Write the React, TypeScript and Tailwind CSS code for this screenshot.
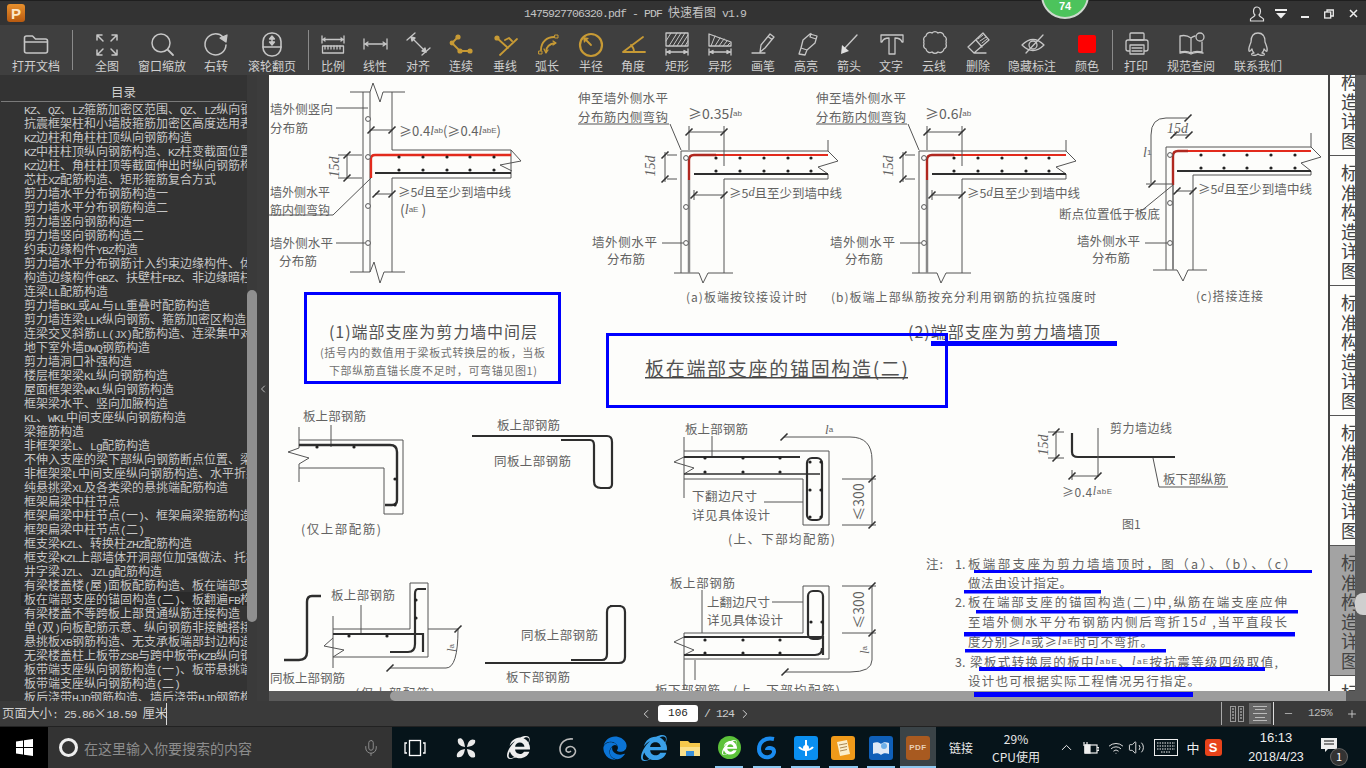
import React from 'react';
import { FaEdge, FaInternetExplorer } from 'react-icons/fa';
import { Mic, Volume2, Wifi, ChevronUp, ChevronLeft, ChevronRight, Minus, Plus } from 'lucide-react';

type P = { c: number; w: number; node: React.ReactNode };
function Placed({ items, className = '' }: { items: P[]; className?: string }) {
  let end = 0;
  return (
    <div className={'flex ' + className}>
      {items.map((it, i) => {
        const ml = it.c - it.w / 2 - end;
        end = it.c + it.w / 2;
        return (
          <div key={i} className="flex shrink-0 flex-col items-center justify-center" style={{ width: it.w, marginLeft: ml }}>
            {it.node}
          </div>
        );
      })}
    </div>
  );
}

function Mixed({ t }: { t: string }) {
  const parts = t.split(/([\x20-\x7e]+)/).filter(Boolean);
  return (
    <>
      {parts.map((p, i) =>
        /^[\x20-\x7e]+$/.test(p) ? (
          <span key={i} className="font-['Liberation_Mono',monospace] text-[11.5px] tracking-[-0.9px]">{p}</span>
        ) : (
          <span key={i}>{p}</span>
        ),
      )}
    </>
  );
}

const Ic = ({ children, gold }: { children: React.ReactNode; gold?: boolean }) => (
  <svg width="40" height="28" viewBox="0 0 40 28" fill="none" stroke={gold ? '#c79a35' : '#c6c6c6'} strokeWidth={gold ? 1.8 : 1.3} strokeLinecap="round" strokeLinejoin="round">
    {children}
  </svg>
);
const G = '#c79a35';

const tools: { c: number; label: string; icon: React.ReactNode }[] = [
  { c: 36, label: '打开文档', icon: <Ic><path d="M8.5 8a2 2 0 0 1 2-2h6l3 3h10a2 2 0 0 1 2 2v10a2 2 0 0 1-2 2h-19a2 2 0 0 1-2-2z" strokeWidth="1.6" /><path d="M8.5 12H31.5" /></Ic> },
  { c: 107, label: '全图', icon: <Ic><g strokeWidth="1.5"><path d="M16 11L10 5M10 10V5H15M24 11L30 5M30 10V5H25M16 19L10 25M10 20V25H15M24 19L30 25M30 20V25H25" /></g></Ic> },
  { c: 162, label: '窗口缩放', icon: <Ic><circle cx="19" cy="13" r="9" strokeWidth="1.5" /><path d="M26 20L31 25" strokeWidth="1.8" /></Ic> },
  { c: 216, label: '右转', icon: <Ic><path d="M27 7A10.5 10.5 0 1 0 30 15" strokeWidth="1.5" /><path d="M24 8L31 5L30 12Z" fill="#c6c6c6" /></Ic> },
  { c: 272, label: '滚轮翻页', icon: <Ic><rect x="11" y="3" width="18" height="23" rx="8.5" strokeWidth="1.6" /><path d="M11 17H29" strokeWidth="1.5" /><path d="M20 7V14" strokeWidth="1.5" /><path d="M17.5 9L20 6L22.5 9ZM17.5 12L20 15L22.5 12Z" fill="#c6c6c6" /></Ic> },
  { c: 333, label: '比例', icon: <Ic><path d="M9 6V13M31 6V13M10 9.5H30M12 8L10 9.5L12 11M28 8L30 9.5L28 11" /><rect x="9.5" y="16" width="21" height="7" /><path d="M12 16V19M15 16V19M18 16V19M21 16V19M24 16V19M27 16V19" /></Ic> },
  { c: 375, label: '线性', icon: <Ic><path d="M9 9V19M32 9V19M10 14H31M13 12L10 14L13 16M28 12L31 14L28 16" /></Ic> },
  { c: 418, label: '对齐', icon: <Ic><path d="M9 10L17 3M24 25L32 18M13 7L28 22" /><path d="M13 7L17 8L14 11ZM28 22L24 21L27 18Z" fill="#c6c6c6" /></Ic> },
  { c: 461, label: '连续', icon: <Ic gold><path d="M11 13L17 7M11 13L19 21L29 21" /><g fill={G} stroke="none"><circle cx="17" cy="7" r="2.6" /><circle cx="11" cy="13" r="2.4" /><circle cx="19" cy="21" r="2.6" /><circle cx="29" cy="21" r="2.6" /></g></Ic> },
  { c: 505, label: '垂线', icon: <Ic gold><path d="M12 8L23 18M15 25L32 9M20 10L24 8L27 11" /><circle cx="12" cy="8" r="2.6" fill={G} stroke="none" /></Ic> },
  { c: 547, label: '弧长', icon: <Ic gold><path d="M14 20C14 12 20 7 27 7M19 22C19 17 22 14 28 13" /><path d="M26 11L29 13L26 15M17 19L19 23L21 20" strokeWidth="1.3" /><rect x="12" y="21" width="3" height="3" strokeWidth="1" /><rect x="28" y="5" width="3" height="3" strokeWidth="1" /></Ic> },
  { c: 591, label: '半径', icon: <Ic gold><circle cx="20" cy="15" r="11" strokeWidth="2.2" /><path d="M20 15L14 9" /><path d="M12 7L18 8L13 13Z" fill={G} stroke="none" /></Ic> },
  { c: 633, label: '角度', icon: <Ic gold><path d="M10 22H32M10 22L30 7M21 22C21 19 20 17 18 15" /></Ic> },
  { c: 677, label: '矩形', icon: <Ic><rect x="9" y="3" width="22" height="13" /><path d="M12 16L20 3M16 16L24 3M20 16L28 3M24 16L31 5M28 16L31 11M9 11L14 3" strokeWidth="1" /><path d="M9 19V25M31 19V25M10 22H30" /><path d="M13 20.5L10 22L13 23.5ZM27 20.5L30 22L27 23.5Z" fill="#c6c6c6" /></Ic> },
  { c: 720, label: '异形', icon: <Ic><path d="M9 4L31 12V16H9Z" /><path d="M11 16L15 6M15 16L20 8M19 16L24 9M23 16L27 11M27 16L30 13" strokeWidth="1" /><path d="M9 19V25M31 19V25M10 22H30" /><path d="M13 20.5L10 22L13 23.5ZM27 20.5L30 22L27 23.5Z" fill="#c6c6c6" /></Ic> },
  { c: 763, label: '画笔', icon: <Ic><path d="M9 23H22M17 22L18 15L27 4L31 7L22 18ZM25 6.5L29 9.5" /></Ic> },
  { c: 806, label: '高亮', icon: <Ic><path d="M24 4L31 6L29 13L21 20L15 18L17 10ZM25 3.5L24 7L30 9M15 18L13 24L19 25L21 20" /></Ic> },
  { c: 849, label: '箭头', icon: <Ic><path d="M28 5L15 19" strokeWidth="1.4" /><path d="M12 24L13 15L20 21Z" fill="#e0e0e0" stroke="none" /></Ic> },
  { c: 891, label: '文字', icon: <Ic><path d="M10 5H32V12H31C30 9 28 8 24 8V24H18V8C14 8 12 9 11 12H10Z" /></Ic> },
  { c: 934, label: '云线', icon: <Ic><path d="M12 6a4 4 0 0 1 6-3a4 4 0 0 1 6 0a4 4 0 0 1 6 3a4 4 0 0 1 2 5a4 4 0 0 1 0 3a4 4 0 0 1-2 5a4 4 0 0 1-6 3a4 4 0 0 1-6 0a4 4 0 0 1-6-3a4 4 0 0 1-2-5a4 4 0 0 1 0-3a4 4 0 0 1 2-5z" /></Ic> },
  { c: 978, label: '删除', icon: <Ic><path d="M10 17L25 3L31 10L16 23ZM16 23H28M18 10L24 17" /><path d="M20 9L25 5M22 11L28 7M24 13L29 9" strokeWidth="1" /></Ic> },
  { c: 1032, label: '隐藏标注', icon: <Ic><path d="M10 15Q21 4 32 15Q21 26 10 15Z" /><circle cx="21" cy="15" r="4" /><path d="M14 23L31 5" /></Ic> },
  { c: 1087, label: '颜色', icon: <div className="mx-[2px] my-[5px] h-[18px] w-[18px] rounded-[2px] bg-[#ff0000]" /> },
  { c: 1136, label: '打印', icon: <Ic><rect x="14" y="3" width="14" height="7" rx="1" /><rect x="10" y="10" width="22" height="11" rx="2" /><rect x="14" y="15" width="14" height="9" fill="#3f3f3f" /><path d="M16 18H26M16 21H26" /></Ic> },
  { c: 1191, label: '规范查阅', icon: <Ic><path d="M20 8C16 5 13 5 9 6V22C13 21 17 21 20 23C23 21 27 21 31 22V12M20 8V23M20 8C21 7 22 6.5 24 6" /><circle cx="29" cy="7" r="4" /><path d="M9 23C13 22 17 22 20 24C23 22 27 22 32 23" /></Ic> },
  { c: 1258, label: '联系我们', icon: <Ic><path d="M20 3C14 3 13 8 13 12C12 15 10 18 11 21C12 22 13 20 14 19C14 21 15 22 16 23C14 23 13 24 14 25C16 26 19 25 20 24C21 25 24 26 26 25C27 24 26 23 24 23C25 22 26 21 26 19C27 20 28 22 29 21C30 18 28 15 27 12C27 8 26 3 20 3Z" /></Ic> },
];

const Sep = () => <div className="h-[40px] w-px bg-[#8a8a8a]" />;

const toolbarItems: P[] = [
  tools[0], { c: 72.5, sep: true }, ...tools.slice(1, 5), { c: 308.5, sep: true }, ...tools.slice(5, 23), { c: 1112.5, sep: true }, ...tools.slice(23),
].map((t: any) =>
  t.sep
    ? { c: t.c, w: 1, node: <Sep /> }
    : {
        c: t.c,
        w: 40,
        node: (
          <>
            <div className="flex h-[28px] items-center justify-center">{t.icon}</div>
            <div className="mt-[0px] whitespace-nowrap text-[12px] leading-[16px] text-[#cfcfcf]">{t.label}</div>
          </>
        ),
      },
);

const toc = [
  'KZ、QZ、LZ箍筋加密区范围、QZ、LZ纵向钢筋构造',
  '抗震框架柱和小墙肢箍筋加密区高度选用表',
  'KZ边柱和角柱柱顶纵向钢筋构造',
  'KZ中柱柱顶纵向钢筋构造、KZ柱变截面位置纵向钢筋',
  'KZ边柱、角柱柱顶等截面伸出时纵向钢筋构造',
  '芯柱XZ配筋构造、矩形箍筋复合方式',
  '剪力墙水平分布钢筋构造一',
  '剪力墙水平分布钢筋构造二',
  '剪力墙竖向钢筋构造一',
  '剪力墙竖向钢筋构造二',
  '约束边缘构件YBZ构造',
  '剪力墙水平分布钢筋计入约束边缘构件、体积配箍率',
  '构造边缘构件GBZ、扶壁柱FBZ、非边缘暗柱构造',
  '连梁LL配筋构造',
  '剪力墙BKL或AL与LL重叠时配筋构造',
  '剪力墙连梁LLK纵向钢筋、箍筋加密区构造',
  '连梁交叉斜筋LL(JX)配筋构造、连梁集中对角斜筋',
  '地下室外墙DWQ钢筋构造',
  '剪力墙洞口补强构造',
  '楼层框架梁KL纵向钢筋构造',
  '屋面框架梁WKL纵向钢筋构造',
  '框架梁水平、竖向加腋构造',
  'KL、WKL中间支座纵向钢筋构造',
  '梁箍筋构造',
  '非框架梁L、Lg配筋构造',
  '不伸入支座的梁下部纵向钢筋断点位置、梁侧面构造',
  '非框架梁L中间支座纵向钢筋构造、水平折梁配筋',
  '纯悬挑梁XL及各类梁的悬挑端配筋构造',
  '框架扁梁中柱节点',
  '框架扁梁中柱节点(一)、框架扁梁箍筋构造',
  '框架扁梁中柱节点(二)',
  '框支梁KZL、转换柱ZHZ配筋构造',
  '框支梁KZL上部墙体开洞部位加强做法、托柱转换梁',
  '井字梁JZL、JZLg配筋构造',
  '有梁楼盖楼(屋)面板配筋构造、板在端部支座的锚固',
  '板在端部支座的锚固构造(二)、板翻遍FB构造',
  '有梁楼盖不等跨板上部贯通纵筋连接构造',
  '单(双)向板配筋示意、纵向钢筋非接触搭接构造',
  '悬挑板XB钢筋构造、无支承板端部封边构造',
  '无梁楼盖柱上板带ZSB与跨中板带KZB纵向钢筋',
  '板带端支座纵向钢筋构造(一)、板带悬挑端纵向钢筋',
  '板带端支座纵向钢筋构造(二)',
  '板后浇带HJD钢筋构造、墙后浇带HJD钢筋构造',
];

const T = ({ x, y, s = 14, l, c = '#555', children, r }: { x: number; y: number; s?: number; l?: number; c?: string; children: React.ReactNode; r?: boolean }) => (
  <text x={x} y={y} fontSize={s} fill={c} opacity={0.92} stroke="none" dominantBaseline="central" textLength={l} lengthAdjust={l ? 'spacing' : undefined} transform={r ? `rotate(-90 ${x} ${y})` : undefined} textAnchor={r ? 'middle' : undefined}>
    {children}
  </text>
);
const It = ({ children }: { children: React.ReactNode }) => <tspan fontStyle="italic" fontFamily="'Liberation Serif',serif">{children}</tspan>;
const Sub = ({ children }: { children: React.ReactNode }) => <tspan fontSize="8" fontFamily="'Liberation Sans',sans-serif">{children}</tspan>;
const Tick = ({ x, y }: { x: number; y: number }) => <path d={`M${x - 3.5} ${y + 3.5}L${x + 3.5} ${y - 3.5}`} stroke="#333" strokeWidth="1.6" />;
const Dots = ({ xs, ys }: { xs: number[]; ys: number[] }) => (
  <g fill="#222" stroke="none">
    {xs.flatMap((x) => ys.map((y) => <circle key={x + '-' + y} cx={x} cy={y} r="1.6" />))}
  </g>
);
const Rings = ({ x, ys }: { x: number; ys: number[] }) => (
  <g fill="#fff" stroke="#555">
    {ys.map((y) => <circle key={y} cx={x} cy={y} r="2.4" />)}
  </g>
);

const WallB = ({ dx, top, tx }: { dx: number; top: string; tx: number }) => (
  <g transform={`translate(${dx} 0)`} stroke="#555" fill="none">
    <path d="M919 151V273M962 179V273M912 273H937L941 283L946 273H971M919 151H1066V140M962 179H1066" />
    <path d="M927 180V273" stroke="#888" strokeWidth="2.5" />
    <path d="M1066 151L1076 161L1056 167L1066 174V179" />
    <path d="M927 180V160Q927 155 932 155H954" stroke="#b02820" strokeWidth="2.4" />
    <path d="M954 155H1066" stroke="#e22a1c" strokeWidth="2.2" />
    <path d="M932 174H1066" stroke="#2e2e2e" strokeWidth="2.2" />
    <Dots xs={[954, 978, 1002, 1026, 1049]} ys={[158, 171]} />
    <Rings x={924} ys={[158, 207, 243]} />
    <path d="M927 132H962M927 126V150M962 126V166M932 195H962M932 190V200" />
    <Tick x={927} y={132} /><Tick x={962} y={132} /><Tick x={932} y={195} /><Tick x={962} y={195} />
    <path d="M907 124H816M908 124L919 150M900 243H921M915 155H905M915 179H905M903 152V182" />
    <Tick x={903} y={155} /><Tick x={903} y={179} />
    <T x={816} y={97} s={12.5} l={90}>伸至墙外侧水平</T>
    <T x={816} y={116} s={12.5} l={90}>分布筋内侧弯钩</T>
    <T x={888} y={166} s={14} r><It>15d</It></T>
    <T x={tx} y={113} s={14}>≥{top}<It>l</It><Sub>ab</Sub></T>
    <T x={967} y={192} s={12.5} l={113}>≥5<It>d</It>且至少到墙中线</T>
    <T x={830} y={241} s={12.5} l={65}>墙外侧水平</T>
    <T x={845} y={258} s={12.5} l={38}>分布筋</T>
  </g>
);

const LinkSq = ({ children, c }: { children?: React.ReactNode; c: string }) => (
  <div className="flex h-[24px] w-[24px] items-center justify-center rounded-[3px]" style={{ background: c }}>{children}</div>
);

const taskItems: P[] = [
  { c: 415, w: 24, node: <svg width="22" height="18" viewBox="0 0 22 18" fill="none" stroke="#fff" strokeWidth="1.3"><rect x="5.5" y="1.5" width="11" height="15" /><path d="M3 4H1V14H3M19 4H21V14H19" /></svg> },
  { c: 466, w: 26, node: <svg width="24" height="24" viewBox="0 0 24 24" fill="#eaeaea"><path d="M11 11C5 10 3 7 4 3C7 1 10 3 11 11ZM13 11C14 5 17 2 21 4C22 7 20 10 13 11ZM13 13C19 14 22 16 21 21C17 23 14 20 13 13ZM11 13C10 19 8 22 3 21C2 17 5 14 11 13Z" /></svg> },
  { c: 518, w: 26, node: <FaInternetExplorer size={23} color="#eee" /> },
  { c: 568, w: 26, node: <svg width="22" height="24" viewBox="0 0 22 24" fill="none" stroke="#bbb" strokeWidth="1.6"><path d="M16 3C8 2 3 7 3 13C3 19 8 22 13 21C18 20 20 15 17 12C14 9 9 11 9 14C9 16 12 17 14 15" /></svg> },
  { c: 615, w: 26, node: <FaEdge size={24} color="#0b74d6" /> },
  { c: 654, w: 26, node: <div className="relative"><FaInternetExplorer size={26} color="#3aa0e8" /></div> },
  { c: 690, w: 26, node: <svg width="22" height="20" viewBox="0 0 22 20"><path d="M1 3H9L11 5H21V18H1Z" fill="#f5c84c" /><rect x="1" y="9" width="20" height="9" fill="#fbe08a" /><rect x="7" y="13" width="8" height="5" fill="#3a8fd8" /></svg> },
  { c: 729, w: 26, node: <div className="flex h-[23px] w-[23px] items-center justify-center rounded-full bg-[#5cc23a]"><FaInternetExplorer size={15} color="#fff" /></div> },
  { c: 767, w: 26, node: <svg width="24" height="26" viewBox="0 0 24 26" fill="none" stroke="#1a8cf0" strokeWidth="4"><path d="M19 4C10 2 4 7 4 14C4 20 9 23 14 22C19 21 20 16 18 14C16 12 12 13 12 15" /></svg> },
  { c: 806, w: 26, node: <LinkSq c="#0a8ff0"><svg width="18" height="18" viewBox="0 0 18 18" fill="none" stroke="#fff" strokeWidth="2"><path d="M9 1V17M2 8C5 12 13 12 16 8" /><circle cx="9" cy="9" r="2" fill="#fff" /></svg></LinkSq> },
  { c: 843, w: 26, node: <LinkSq c="#f09a1a"><svg width="16" height="18" viewBox="0 0 16 18"><path d="M2 3L12 1L15 15L5 17Z" fill="#fbeecb" /><path d="M4 6L12 4.5M5 9L12 7.5M5 12L12 10.5" stroke="#a85" strokeWidth="1" /></svg></LinkSq> },
  { c: 881, w: 26, node: <LinkSq c="#0f5fb8"><svg width="18" height="16" viewBox="0 0 18 16"><path d="M1 3C4 2 7 2 9 4C11 2 14 2 17 3V14C14 13 11 13 9 15C7 13 4 13 1 14Z" fill="#dfe9f5" /><circle cx="12" cy="6" r="3" fill="#6fb0e8" /></svg></LinkSq> },
  { c: 918, w: 36, node: <div className="flex h-[24px] w-[24px] items-center justify-center rounded-[3px] bg-[#a85a20] font-['Liberation_Sans',sans-serif] text-[8px] font-bold tracking-[0.5px] text-[#e8d0b8]">PDF</div> },
];

const trayText = 'text-[12px] leading-[16px] text-[#e8e8e8]';
const trayItems: P[] = [
  { c: 961, w: 30, node: <span className={trayText}>链接</span> },
  { c: 1016, w: 56, node: <><span className={trayText + ' mb-[2px]'}>29%</span><span className={trayText}>CPU使用</span></> },
  { c: 1066, w: 16, node: <ChevronUp size={17} color="#eee" strokeWidth={1.4} /> },
  { c: 1090, w: 18, node: <svg width="18" height="14" viewBox="0 0 18 14" fill="none" stroke="#eee" strokeWidth="1.2"><rect x="4" y="4" width="12" height="8" /><path d="M16 6.5H18V9.5H16" /><rect x="4" y="4" width="5" height="8" fill="#eee" /><path d="M3 1V5M6 1V5" /></svg> },
  { c: 1116, w: 18, node: <Wifi size={16} color="#ddd" strokeWidth={1.5} /> },
  { c: 1136, w: 18, node: <Volume2 size={17} color="#eee" strokeWidth={1.3} /> },
  { c: 1166, w: 24, node: <svg width="24" height="17" viewBox="0 0 24 17" fill="none" stroke="#eee" strokeWidth="1"><rect x="0.5" y="0.5" width="23" height="16" /><path d="M3 4H21M3 7H21M3 10H21M7 13H17" strokeDasharray="1.5 1" /></svg> },
  { c: 1193, w: 14, node: <span className="text-[13px] text-[#eee]">中</span> },
  { c: 1213, w: 18, node: <div className="flex h-[17px] w-[17px] items-center justify-center rounded-[3px] bg-[#e8431a] font-['Liberation_Sans',sans-serif] text-[13px] font-bold leading-none text-white">S</div> },
  { c: 1276, w: 62, node: <><span className="mb-[5px] text-[13px] leading-[14px] text-[#eee] font-['Liberation_Sans',sans-serif]">16:13</span><span className="text-[12.5px] leading-[14px] text-[#eee] font-['Liberation_Sans',sans-serif]">2018/4/23</span></> },
  { c: 1333, w: 28, node: <div className="relative h-[24px] w-[26px]"><svg width="17" height="17" viewBox="0 0 17 17" className="ml-[1px] mt-[1px]"><path d="M0 1H16V12H7L4 15V12H0Z" fill="#eee" /><path d="M3 4H13M3 7H13" stroke="#111" strokeWidth="1" /></svg><span className="absolute bottom-[-5px] right-[-1px] flex h-[16px] w-[16px] items-center justify-center rounded-full bg-[#333] text-[11px] leading-none text-white ring-1 ring-[#666]">1</span></div> },
];

const blue = '#0000ff';

function Drawing() {
  return (
    <svg width="1059" height="616" viewBox="269 75 1059 616" className="block shrink-0 bg-[#fdfdfb]" stroke="none">
      {/* (1) mid-floor detail */}
      <g stroke="#555" fill="none">
        <path d="M350 92H370L373 83L380 102L383 92H405M363 92V272M370 92V272M392 92V150H511M392 178V272M350 272H370L374 262L380 283L384 272H405M392 178H511V150M511 150L521 161L500 165L512 171" />
        <path d="M371 178V159Q371 155 375 155H511" stroke="#e22a1c" strokeWidth="2.3" />
        <path d="M375 173H511" stroke="#2e2e2e" strokeWidth="2.2" />
        <Dots xs={[399, 423, 447, 470, 494]} ys={[157, 170]} />
        <Rings x={368} ys={[119, 157, 206, 243]} />
        <path d="M336 108H368M336 243H365M269 215H333L371 178M370 130H392M375 194H392M347 155V178M338 155H362M338 178H362" />
        <Tick x={371} y={130} /><Tick x={392} y={130} /><Tick x={376} y={194} /><Tick x={392} y={194} /><Tick x={347} y={155} /><Tick x={347} y={178} />
        <T x={270} y={108} s={12.5} l={63}>墙外侧竖向</T>
        <T x={270} y={127} s={12.5} l={38}>分布筋</T>
        <T x={270} y={191} s={12} l={60}>墙外侧水平</T>
        <T x={270} y={209} s={12} l={60}>筋内侧弯钩</T>
        <T x={270} y={242} s={12.5} l={63}>墙外侧水平</T>
        <T x={279} y={260} s={12.5} l={38}>分布筋</T>
        <T x={334} y={167} s={14} r><It>15d</It></T>
        <T x={399} y={130} s={13} l={102}>≥0.4<It>l</It><Sub>ab</Sub>(≥0.4<It>l</It><Sub>abE</Sub>)</T>
        <T x={398} y={191} s={12.5} l={113}>≥5<It>d</It>且至少到墙中线</T>
        <T x={400} y={209} s={14}>(<It>l</It><Sub>aE</Sub> )</T>
      </g>

      <WallB dx={-238} top="0.35" tx={926} />
      <WallB dx={0} top="0.6" tx={925} />

      {/* (c) */}
      <g stroke="#555" fill="none">
        <path d="M1166 147V270M1193 175V270M1153 270H1177L1183 281L1188 270H1207M1166 147H1311V133M1193 175H1311M1311 147L1321 157L1301 163L1311 171V175" />
        <path d="M1173 185V270" stroke="#888" strokeWidth="2" />
        <path d="M1173 185V156Q1173 151 1178 151H1188" stroke="#b02820" strokeWidth="2.4" />
        <path d="M1188 151H1311" stroke="#e22a1c" strokeWidth="2.2" />
        <path d="M1177 171H1311" stroke="#2e2e2e" strokeWidth="2.2" />
        <Dots xs={[1201, 1224, 1247, 1271, 1295]} ys={[155, 168]} />
        <Rings x={1170} ys={[155, 203, 243]} />
        <path d="M1187 118H1166Q1151 118 1151 135V183M1146 184H1173M1173 135H1189M1176 191H1193M1173 185L1140 212M1145 243H1167" />
        <Tick x={1188} y={118} /><Tick x={1152} y={184} /><Tick x={1174} y={135} /><Tick x={1189} y={135} /><Tick x={1177} y={191} /><Tick x={1193} y={191} />
        <T x={1143} y={152} s={14}><It>l</It><Sub>1</Sub></T>
        <T x={1167} y={128} s={14}><It>15d</It></T>
        <T x={1198} y={188} s={12.5} l={114}>≥5<It>d</It>且至少到墙中线</T>
        <T x={1059} y={213} s={12.5} l={101}>断点位置低于板底</T>
        <T x={1077} y={240} s={12.5} l={63}>墙外侧水平</T>
        <T x={1092} y={257} s={12.5} l={38}>分布筋</T>
      </g>

      <T x={686} y={296} s={12} l={121}>(a)板端按铰接设计时</T>
      <T x={831} y={296} s={12} l={265}>(b)板端上部纵筋按充分利用钢筋的抗拉强度时</T>
      <T x={1196} y={295} s={12} l={67}>(c)搭接连接</T>

      {/* captions */}
      <rect x="305.5" y="293.5" width="254" height="89" fill="none" stroke={blue} strokeWidth="3" />
      <T x={329} y={331} s={16} c="#444" l={208}>(1)端部支座为剪力墙中间层</T>
      <T x={320} y={352} s={11} c="#666" l={225}>(括号内的数值用于梁板式转换层的板，当板</T>
      <T x={329} y={370} s={11} c="#666" l={208}>下部纵筋直锚长度不足时，可弯锚见图1)</T>
      <T x={908} y={331} s={16} c="#444" l={192}>(2)端部支座为剪力墙墙顶</T>
      <rect x="607.5" y="334.5" width="339" height="72" fill="none" stroke={blue} strokeWidth="3" />
      <T x={645} y={367} s={19} c="#444" l={263}>板在端部支座的锚固构造(二)</T>
      <rect x="645" y="377" width="263" height="1.5" fill="#444" />
      <rect x="931" y="341" width="186" height="5" fill={blue} />

      {/* A */}
      <g stroke="#555" fill="none">
        <path d="M299 427V448M299 468V482M299 440H403V514H384V468H299M331 425V447M299 448L288 452L309 458L299 464V468" />
        <path d="M299 445H390Q397 445 397 452V500Q397 505 392 505H385" stroke="#2e2e2e" strokeWidth="2.4" />
        <Dots xs={[317, 354]} ys={[447]} /><Dots xs={[395]} ys={[479, 505]} />
        <T x={303} y={415} s={12.5} l={63}>板上部钢筋</T>
        <T x={301} y={528} s={12.5} l={80}>(仅上部配筋)</T>
      </g>
      {/* B */}
      <g fill="none">
        <path d="M472 436H607Q612 436 612 442V484Q612 488 608 488H600" stroke="#2e2e2e" strokeWidth="2.2" />
        <path d="M561 440H590Q594 440 594 445V481Q594 488 601 488H610" stroke="#2e2e2e" strokeWidth="2.2" />
        <T x={497} y={424} s={12.5} l={63}>板上部钢筋</T>
        <T x={494} y={460} s={12.5} l={77}>同板上部钢筋</T>
      </g>
      {/* C */}
      <g stroke="#555" fill="none">
        <path d="M684 437V498M684 451H829V525H803V479H684M712 436V457M684 457L674 462L694 468L684 474M764 502H803M784 437H850Q872 437 872 460V525M842 479H876M842 525H876" />
        <path d="M684 457H800" stroke="#2e2e2e" strokeWidth="2.2" />
        <path d="M684 474H820" stroke="#2e2e2e" strokeWidth="1.6" />
        <rect x="807" y="458" width="15" height="62" rx="5" stroke="#2e2e2e" strokeWidth="2.2" />
        <Dots xs={[705, 743, 780]} ys={[458, 472]} /><Dots xs={[810, 821]} ys={[462, 490, 517]} />
        <Tick x={784} y={437} /><Tick x={872} y={479} /><Tick x={872} y={525} />
        <T x={685} y={428} s={12.5} l={63}>板上部钢筋</T>
        <T x={692} y={495} s={12.5} l={65}>下翻边尺寸</T>
        <T x={692} y={514} s={12.5} l={78}>详见具体设计</T>
        <T x={825} y={429} s={13}><It>l</It><Sub>a</Sub></T>
        <T x={858} y={502} s={14} r>≤300</T>
        <T x={728} y={538} s={12.5} l={107}>(上、下部均配筋)</T>
      </g>
      {/* Fig 1 */}
      <g stroke="#555" fill="none">
        <path d="M1072 433V452Q1072 457 1078 457H1175" stroke="#2e2e2e" strokeWidth="2.2" />
        <path d="M1098 428V477M1048 432H1064M1048 458H1064M1056 432V458M1153 458L1159 487H1228M1072 476H1098M1072 470V480" />
        <Tick x={1056} y={432} /><Tick x={1056} y={458} /><Tick x={1072} y={476} /><Tick x={1098} y={476} />
        <T x={1110} y={427} s={12} l={62}>剪力墙边线</T>
        <T x={1043} y={445} s={14} r><It>15d</It></T>
        <T x={1163} y={478} s={12.5} l={63}>板下部纵筋</T>
        <T x={1062} y={491} s={12} l={50}>≥0.4<It>l</It><Sub>abE</Sub></T>
        <T x={1122} y={523} s={12}>图1</T>
      </g>
      {/* D */}
      <g stroke="#555" fill="none">
        <path d="M321 596H312Q307 596 307 602V652Q307 660 299 660H284" stroke="#2e2e2e" strokeWidth="2.4" />
        <path d="M333 616V668M410 583H428V657H333M410 583V629H333M361 605V634M333 638L324 646L344 650L333 657M428 629H458Q458 668 446 668H390" />
        <path d="M333 634H423V652" stroke="#2e2e2e" strokeWidth="2.2" />
        <path d="M426 589H418Q415 589 415 594V644Q415 652 408 652H390" stroke="#2e2e2e" strokeWidth="2.2" />
        <Dots xs={[349, 387]} ys={[636]} /><Dots xs={[416]} ys={[600, 618]} />
        <Tick x={458} y={629} /><Tick x={390} y={668} />
        <T x={331} y={594} s={12.5} l={64}>板上部钢筋</T>
        <T x={451} y={648} s={13} r><It>l</It><Sub>a</Sub></T>
        <T x={270} y={677} s={12.5} l={75}>同板上部钢筋</T>
        <T x={355} y={692} s={12.5} l={80}>(仅上部配筋)</T>
      </g>
      {/* E */}
      <g fill="none">
        <path d="M485 663H619Q625 663 625 657V612Q625 606 619 606H610" stroke="#2e2e2e" strokeWidth="2.2" />
        <path d="M571 660H602Q607 660 607 654V612Q607 606 613 606H621" stroke="#2e2e2e" strokeWidth="2.2" />
        <T x={521} y={634} s={12.5} l={77}>同板上部钢筋</T>
        <T x={506} y={676} s={12.5} l={64}>板下部钢筋</T>
      </g>
      {/* F */}
      <g stroke="#555" fill="none">
        <path d="M684 633V690M803 586H829V659H684M803 586V633H684M702 590V633M772 602H803M842 586H876M842 633H876M872 586V660Q872 672 850 672H785M695 660V680M684 637L674 642L694 650L684 655" />
        <path d="M684 637H823V655M684 655H815Q822 655 822 648" stroke="#2e2e2e" strokeWidth="2.2" />
        <rect x="808" y="591" width="15" height="48" rx="5" stroke="#2e2e2e" strokeWidth="2.2" />
        <Dots xs={[705, 743, 780]} ys={[640, 653]} /><Dots xs={[811, 822]} ys={[622]} />
        <Tick x={872} y={586} /><Tick x={872} y={633} /><Tick x={785} y={672} />
        <T x={670} y={582} s={12.5} l={65}>板上部钢筋</T>
        <T x={707} y={601} s={12.5} l={63}>上翻边尺寸</T>
        <T x={707} y={619} s={12.5} l={76}>详见具体设计</T>
        <T x={858} y={610} s={14} r>≤300</T>
        <T x={864} y={650} s={13} r><It>l</It><Sub>a</Sub></T>
        <T x={655} y={689} s={12.5} l={65}>板下部钢筋</T>
        <T x={733} y={689} s={12.5} l={107}>(上、下部均配筋)</T>
      </g>

      {/* Notes */}
      <g>
        <T x={926} y={563} s={12.5} l={17}>注:</T>
        <T x={955} y={563} s={12.5}>1.</T>
        <T x={968} y={563} s={12.5} l={328}>板端部支座为剪力墙墙顶时，图（a）、（b）、（c）</T>
        <T x={968} y={582} s={12.5} l={104}>做法由设计指定。</T>
        <T x={955} y={601} s={12.5}>2.</T>
        <T x={968} y={601} s={12.5} l={319}>板在端部支座的锚固构造(二)中,纵筋在端支座应伸</T>
        <T x={968} y={621} s={12.5} l={319}>至墙外侧水平分布钢筋内侧后弯折15<It>d</It> ,当平直段长</T>
        <T x={968} y={641} s={12.5} l={185}>度分别≥<It>l</It><Sub>a</Sub>或≥<It>l</It><Sub>aE</Sub>时可不弯折。</T>
        <T x={955} y={661} s={12.5}>3.</T>
        <T x={970} y={661} s={12.5} l={308}>梁板式转换层的板中<It>l</It><Sub>abE</Sub>、<It>l</It><Sub>aE</Sub>按抗震等级四级取值,</T>
        <T x={968} y={680} s={12.5} l={232}>设计也可根据实际工程情况另行指定。</T>
      </g>
      <g fill={blue}>
        <rect x="974" y="570" width="338" height="3" />
        <rect x="964" y="590" width="137" height="3.5" />
        <rect x="976" y="610" width="322" height="3.5" />
        <rect x="964" y="632" width="331" height="4.5" />
        <rect x="965" y="649" width="201" height="3.5" />
        <rect x="979" y="667" width="286" height="4" />
      </g>
    </svg>
  );
}

const tabChars = '标准构造详图'.split('');

function Tab({ active, first }: { active?: boolean; first?: boolean }) {
  return (
    <div className={(first ? '-mt-[49px] ' : '') + 'flex h-[130px] shrink-0 flex-col overflow-hidden border-b border-[#555] pl-[11px] pt-[7px] text-[18px] leading-[19.6px] ' + (active ? 'bg-[#a3a3a3] text-[#444]' : 'bg-[#fdfdfb] text-[#444]')}>
      {tabChars.map((c, i) => <span key={i}>{c}</span>)}
    </div>
  );
}

export default function App() {
  return (
    <div className="relative flex h-[768px] w-[1366px] flex-col overflow-hidden bg-[#333] font-['Noto_Sans_CJK_SC','Liberation_Sans',sans-serif]">
      {/* title bar */}
      <div className="relative flex h-[25px] shrink-0 items-center border-t border-[#1f1f1f] bg-[#333]">
        <div className="ml-[7px] flex h-[18px] w-[18px] items-center justify-center rounded-[3px] bg-gradient-to-b from-[#e8902c] to-[#b85a10] font-['Liberation_Sans',sans-serif] text-[15px] font-bold leading-none text-[#fbe6c8]">P</div>
        <div className="ml-[499px] whitespace-nowrap text-[12px] leading-none text-[#c4c4c4]"><Mixed t="1475927706320.pdf - PDF " /><span>快速看图</span><Mixed t=" v1.9" /></div>
        <Placed
          className="absolute left-0 top-0 h-[25px] items-center"
          items={[
            { c: 1257, w: 16, node: <svg width="16" height="16" viewBox="0 0 16 16" fill="none" stroke="#ddd" strokeWidth="1.2"><path d="M8 1C5.5 1 4.5 3 4.5 5.5C4.5 7 5 8 6 9C6 10.5 3 11 1.5 13V15H14.5V13C13 11 10 10.5 10 9C11 8 11.5 7 11.5 5.5C11.5 3 10.5 1 8 1Z" /></svg> },
            { c: 1281, w: 12, node: <svg width="12" height="10" viewBox="0 0 12 10" fill="#eee"><rect width="12" height="2" /><path d="M1 4H11L6 9.5Z" /></svg> },
            { c: 1304.5, w: 8, node: <div className="mt-[6px] h-[2px] w-[8px] bg-[#eee]" /> },
            { c: 1329, w: 10, node: <svg width="10" height="10" viewBox="0 0 10 10" fill="none" stroke="#eee" strokeWidth="1.3"><rect x="0.7" y="3" width="6" height="6" /><path d="M3 3V1H9.3V7H7" /></svg> },
            { c: 1353, w: 10, node: <svg width="9" height="9" viewBox="0 0 9 9" stroke="#eee" strokeWidth="1.5"><path d="M1 1L8 8M8 1L1 8" /></svg> },
          ]}
        />
      </div>

      {/* toolbar */}
      <div className="h-[50px] shrink-0 bg-[#3f3f3f] pt-[5px]">
        <Placed items={toolbarItems} className="h-[44px] items-start" />
      </div>

      {/* main */}
      <div className="flex h-[626px] shrink-0">
        <div className="relative flex h-full w-[247px] shrink-0 flex-col bg-[#333]">
          <div className="mx-[1px] flex h-[27px] shrink-0 items-end justify-center border-b border-[#7a7a7a] pb-[0px] text-[12.5px] leading-[18px] text-[#cfcfcf]">目录</div>
          <div className="flex-1 overflow-hidden">
            {toc.map((t, i) => (
              <div key={i} className={'h-[14px] whitespace-nowrap text-[12px] leading-[14px] text-[#c6c6c6] ' + (i === 35 ? 'ml-[21px] bg-[#2a2a2a] pl-[3px]' : 'pl-[24px]')}>
                <Mixed t={t} />
              </div>
            ))}
          </div>
        </div>
        <div className="flex h-full w-[10px] shrink-0 flex-col bg-[#3a3a3a] pt-[215px]">
          <div className="h-[332px] w-[10px] rounded-[5px] bg-[#8f8f8f]" />
        </div>
        <div className="flex h-full w-[12px] shrink-0 items-start justify-center bg-[#3c3c3c] pt-[306px]">
          <ChevronLeft size={16} color="#ddd" strokeWidth={1.6} />
        </div>
        <div className="flex h-full w-[1097px] shrink-0 flex-col">
          <div className="flex h-[616px] shrink-0 overflow-hidden">
            <Drawing />
            <div className="flex w-[27px] shrink-0 flex-col overflow-hidden border-l-2 border-[#444] bg-[#fdfdfb]">
              <Tab first />
              <Tab />
              <Tab />
              <Tab />
              <Tab active />
              <Tab />
            </div>
            <div className="flex w-[11px] shrink-0 flex-col bg-[#5a5a5a] pt-[518px]">
              <div className="h-[22px] w-[11px] rounded-l-[8px] bg-[#cfcfcf]" />
            </div>
          </div>
          <div className="relative h-[10px] shrink-0 bg-[#5a5a5a] pl-[121px]">
            <div className="h-[10px] w-[956px] rounded-l-[5px] bg-[#9c9c9c]" />
            <div className="absolute left-[705px] top-[1px] h-[5px] w-[219px] bg-[#0000ff]" />
          </div>
        </div>
      </div>

      {/* status bar */}
      <div className="h-[26px] shrink-0 border-b border-[#222] bg-[#3a3a3a]">
        <Placed
          className="h-[25px] items-center"
          items={[
            { c: 84, w: 164, node: <span className="w-full whitespace-nowrap text-[12.5px] leading-none text-[#cfcfcf]"><Mixed t="页面大小: 25.86" />×<Mixed t="18.59 " />厘米</span> },
            { c: 166.5, w: 1, node: <div className="h-[22px] w-px bg-[#ddd]" /> },
            { c: 646, w: 12, node: <ChevronLeft size={14} color="#ddd" strokeWidth={1.6} /> },
            { c: 678, w: 40, node: <div className="flex h-[17px] w-[40px] items-center justify-center rounded-[3px] bg-white text-[11px] leading-none text-[#222] font-['Liberation_Mono',monospace]">106</div> },
            { c: 719, w: 32, node: <span className="whitespace-nowrap font-['Liberation_Mono',monospace] text-[11.5px] tracking-[-0.9px] leading-none text-[#ccc]">/ 124</span> },
            { c: 745, w: 12, node: <ChevronRight size={14} color="#ddd" strokeWidth={1.6} /> },
            { c: 1221.5, w: 1, node: <div className="h-[23px] w-px bg-[#aaa]" /> },
            { c: 1237, w: 16, node: <svg width="16" height="16" viewBox="0 0 16 16" fill="none" stroke="#999"><rect x="1.5" y="0.5" width="5" height="15" /><rect x="9.5" y="0.5" width="5" height="15" /><path d="M3 3H5M3 6H5M3 9H5M3 12H5M11 3H13M11 6H13M11 9H13M11 12H13" stroke="#ccc" /></svg> },
            { c: 1260, w: 22, node: <div className="flex h-[21px] w-[22px] items-center justify-center bg-[#666]"><svg width="14" height="17" viewBox="0 0 14 17" stroke="#bbb"><path d="M0 1.5H14M2 4.5H12M0 8.5H14M2 12.5H12M0 15.5H14" /></svg></div> },
            { c: 1273.5, w: 1, node: <div className="h-[23px] w-px bg-[#ddd]" /> },
            { c: 1288, w: 12, node: <Minus size={11} color="#ccc" strokeWidth={1.6} /> },
            { c: 1320, w: 28, node: <span className="whitespace-nowrap font-['Liberation_Mono',monospace] text-[11px] tracking-[-0.6px] leading-none text-[#bbb]">125%</span> },
            { c: 1352, w: 12, node: <Plus size={12} color="#ddd" strokeWidth={1.6} /> },
          ]}
        />
      </div>

      {/* taskbar */}
      <div className="relative h-[41px] shrink-0 bg-[#06141a]">
        <div className="flex h-[41px]">
          <div className="flex w-[48px] shrink-0 items-center justify-center bg-black">
            <svg width="17" height="17" viewBox="0 0 17 17" fill="#fff"><path d="M0 2.4L7 1.4V8H0ZM8 1.3L17 0V8H8ZM0 9H7V15.6L0 14.6ZM8 9H17V17L8 15.7Z" /></svg>
          </div>
          <div className="flex w-[344px] shrink-0 items-center bg-[#333]">
            <div className="ml-[11px] h-[19px] w-[19px] rounded-full border-[3px] border-[#eee]" />
            <span className="ml-[6px] text-[14px] leading-none text-[#8c8c8c]">在这里输入你要搜索的内容</span>
            <Mic size={18} color="#8c8c8c" strokeWidth={1.3} className="ml-[110px]" />
          </div>
        </div>
        <div className="absolute left-[900px] top-0 h-[41px] w-[36px] bg-[#3a4347]" />
        <Placed className="absolute left-0 top-0 h-[41px] items-center" items={taskItems} />
        <Placed className="absolute left-0 top-0 h-[41px] items-center" items={trayItems} />
        <div className="absolute bottom-0 left-0 flex h-[2px] w-full">
          <div className="ml-[715px] w-[28px] bg-[#8ec8f0]" />
          <div className="ml-[10px] w-[28px] bg-[#8ec8f0]" />
          <div className="ml-[10px] w-[29px] bg-[#8ec8f0]" />
          <div className="ml-[9px] w-[29px] bg-[#8ec8f0]" />
          <div className="ml-[9px] w-[28px] bg-[#8ec8f0]" />
          <div className="ml-[5px] w-[36px] bg-[#8ec8f0]" />
        </div>
      </div>

      {/* green badge */}
      <div className="absolute left-[1041px] top-[-29px] flex h-[48px] w-[48px] items-end justify-center rounded-full border-2 border-[#cfd8cf] bg-[#4cc35c] pb-[5px] font-['Liberation_Sans',sans-serif] text-[11px] font-bold leading-none text-white">74</div>
    </div>
  );
}
